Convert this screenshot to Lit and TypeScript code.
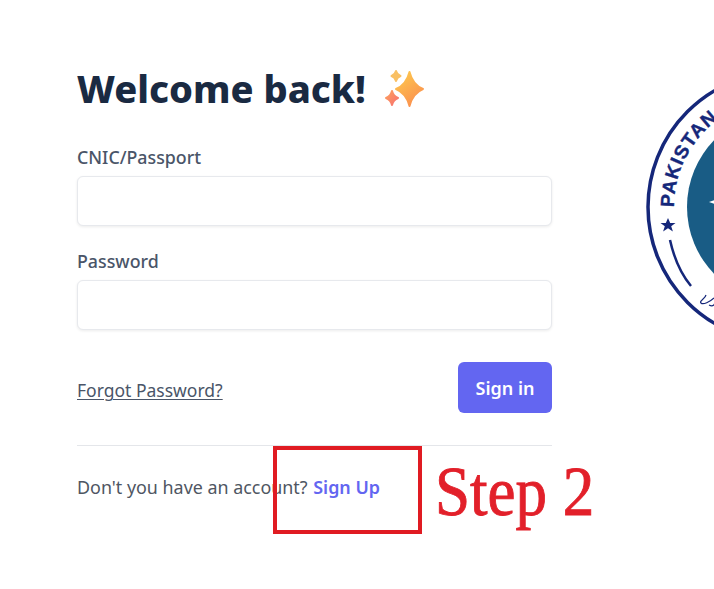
import { LitElement, html, css, svg } from "lit";
import { customElement } from "lit/decorators.js";

const star = (cx: number, cy: number, rx: number, ry: number, fill: string) => {
  const kx = rx * 0.24;
  const ky = ry * 0.24;
  return svg`<path d="M${cx} ${cy - ry} Q${cx + kx} ${cy - ky} ${cx + rx} ${cy} Q${cx + kx} ${cy + ky} ${cx} ${cy + ry} Q${cx - kx} ${cy + ky} ${cx - rx} ${cy} Q${cx - kx} ${cy - ky} ${cx} ${cy - ry}Z" fill="${fill}" stroke="${fill}" stroke-width="2" stroke-linejoin="round"/>`;
};

@customElement("app-root")
export class AppRoot extends LitElement {
  static styles = css`
    :host {
      display: flex;
      position: relative;
      width: 714px;
      height: 589px;
      overflow: hidden;
      background: #fff;
      font-family: "Noto Sans", "Open Sans", sans-serif;
    }
    .form {
      flex: none;
      width: 475px;
      margin-left: 77px;
      padding-top: 63px;
    }
    h1 {
      display: flex;
      align-items: center;
      gap: 19px;
      margin: 0 0 32px;
      height: 50px;
      font-size: 38px;
      line-height: 50px;
      font-weight: 800;
      color: #1a2a42;
      white-space: nowrap;
    }
    .sparkle { width: 44px; height: 44px; flex: none; margin-top: 2px; }
    label {
      display: block;
      height: 25px;
      font-size: 17.8px;
      line-height: 25px;
      font-weight: 500;
      color: #4a5568;
    }
    .input {
      box-sizing: border-box;
      height: 50px;
      margin: 6px 0 23px;
      border: 1px solid #e7e9ed;
      border-radius: 6px;
      background: #fff;
      box-shadow: 0 1px 3px rgba(0, 0, 0, 0.08);
    }
    .actions {
      display: flex;
      justify-content: space-between;
      align-items: center;
      margin-top: 32px;
      padding-bottom: 32px;
      border-bottom: 1px solid #e4e6ea;
    }
    .forgot {
      font-size: 17.5px;
      color: #4a5568;
      text-decoration: underline;
      text-underline-offset: 2px;
      text-decoration-thickness: 1px;
      margin-top: 5px;
    }
    .btn {
      width: 94px;
      height: 51px;
      border: 0;
      border-radius: 6px;
      background: #6366f1;
      color: #fff;
      font: 600 18px "Noto Sans", sans-serif;
    }
    .signup {
      margin: 29px 0 0;
      font-size: 17.9px;
      line-height: 25px;
      color: #4f5662;
    }
    .signup a {
      color: #6366f1;
      font-weight: 600;
      margin-left: 1px;
    }
    .seal {
      flex: none;
      width: 280px;
      height: 280px;
      margin: 66px 0 0 91px;
    }
    .box {
      position: absolute;
      left: 273px;
      top: 446px;
      box-sizing: border-box;
      width: 149px;
      height: 88px;
      border: 4px solid #e01b22;
    }
    .step {
      position: absolute;
      left: 435px;
      top: 448px;
      font-family: "Liberation Serif", serif;
      font-size: 70px;
      line-height: 88px;
      color: #e2202a;
      -webkit-text-stroke: 0.9px #e2202a;
      white-space: nowrap;
      transform: scaleX(0.9);
      transform-origin: left center;
    }
    .seal text { font-family: "Liberation Sans", sans-serif; font-weight: 700; }
  `;

  render() {
    return html`
      <section class="form">
        <h1>
          Welcome back!
          <svg class="sparkle" viewBox="0 0 44 44" aria-hidden="true">
            <defs>
              <linearGradient id="g1" x1="0.2" y1="0" x2="0.8" y2="1">
                <stop offset="0" stop-color="#fdc84e" />
                <stop offset="1" stop-color="#fb8d4f" />
              </linearGradient>
              <linearGradient id="g2" x1="0" y1="0" x2="1" y2="1">
                <stop offset="0" stop-color="#fca25e" />
                <stop offset="1" stop-color="#f87070" />
              </linearGradient>
            </defs>
            ${star(24.5, 22, 13.5, 17, "url(#g1)")}
            ${star(11, 9, 4.5, 5, "#f9c064")}
            ${star(7, 31, 6, 7, "url(#g2)")}
          </svg>
        </h1>
        <label>CNIC/Passport</label>
        <div class="input"></div>
        <label>Password</label>
        <div class="input"></div>
        <div class="actions">
          <a class="forgot">Forgot Password?</a>
          <button class="btn">Sign in</button>
        </div>
        <p class="signup">Don't you have an account? <a>Sign Up</a></p>
      </section>
      <svg class="seal" viewBox="0 0 280 280" aria-hidden="true">
        <defs>
          <path id="arc" d="M31 141 A109 109 0 0 1 249 141" fill="none" />
        </defs>
        <circle cx="140" cy="141" r="135" fill="#fff" stroke="#15277a" stroke-width="3.5" />
        <circle cx="140" cy="141" r="96" fill="#195c85" />
        <path d="M66 136 L72 134 L72 138Z" fill="#fff" />
        <text font-size="19" fill="#15277a" letter-spacing="1" stroke="#15277a" stroke-width="0.4">
          <textPath href="#arc">PAKISTAN</textPath>
        </text>
        <path d="M25 152l2.2 5h5.3l-4.3 3.2 1.7 5.3-4.9-3.2-4.9 3.2 1.7-5.3-4.3-3.2h5.3z" fill="#15277a" />
        <path d="M27 174 C31 192 38 208 48 220" fill="none" stroke="#15277a" stroke-width="2.5" />
        <path d="M71 232c-4 4-11 7-13 5s4-4 5-8m3 10c4 2 6 0 6-4" fill="none" stroke="#15277a" stroke-width="1.2" />
      </svg>
      <div class="box"></div>
      <div class="step">Step 2</div>
    `;
  }
}
